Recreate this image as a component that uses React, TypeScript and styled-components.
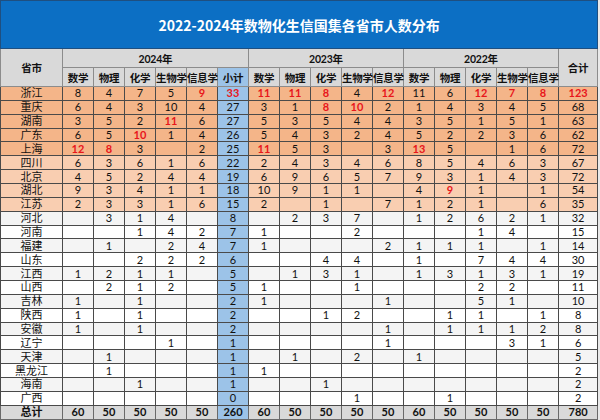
import styled, { createGlobalStyle } from 'styled-components';

// 2022-2024 数物化生信 国集各省市人数分布 —— 表格截图复刻

const GlobalStyle = createGlobalStyle`
  html, body {
    margin: 0;
    padding: 0;
    background: #e9e9e9;
  }
  body {
    font-family: "Noto Sans CJK SC", "Noto Sans", sans-serif;
  }
`;

// ─── data ─────────────────────────────────────────────────────────────────────

type Val = number | null;
type Tone = 'hot' | 'warm' | 'plain';

interface Province {
  name: string;
  // 15 values: 2024 ×5, 2023 ×5, 2022 ×5
  v: Val[];
  // indexes of the displayed numeric columns (0..16) shown in red
  red?: number[];
  tone: Tone;
}

const _ = null;

const provinces: Province[] = [
  { name: '浙江', tone: 'hot', v: [8, 4, 7, 5, 9, 11, 11, 8, 4, 12, 11, 6, 12, 7, 8], red: [4, 5, 6, 7, 8, 10, 13, 14, 15, 16] },
  { name: '重庆', tone: 'hot', v: [6, 4, 3, 10, 4, 3, 1, 8, 10, 2, 1, 4, 3, 4, 5], red: [8, 9] },
  { name: '湖南', tone: 'hot', v: [3, 5, 2, 11, 6, 5, 3, 5, 4, 4, 3, 5, 1, 5, 1], red: [3] },
  { name: '广东', tone: 'hot', v: [6, 5, 10, 1, 4, 5, 4, 3, 2, 4, 5, 2, 2, 3, 6], red: [2] },
  { name: '上海', tone: 'hot', v: [12, 8, 3, _, 2, 11, 5, 3, _, 3, 13, 5, _, 1, 6], red: [0, 1, 6, 11] },
  { name: '四川', tone: 'warm', v: [6, 3, 6, 1, 6, 2, 4, 3, 4, 6, 8, 5, 4, 6, 3] },
  { name: '北京', tone: 'warm', v: [4, 5, 2, 4, 4, 6, 9, 6, 5, 7, 9, 3, 1, 4, 3] },
  { name: '湖北', tone: 'warm', v: [9, 3, 4, 1, 1, 10, 9, 1, 1, _, 4, 9, 1, _, 1], red: [12] },
  { name: '江苏', tone: 'warm', v: [2, 3, 3, 1, 6, 2, _, 1, _, 7, 1, 2, 1, _, 6] },
  { name: '河北', tone: 'plain', v: [_, 3, 1, 4, _, _, 2, 3, 7, _, 1, 2, 6, 2, 1] },
  { name: '河南', tone: 'plain', v: [_, _, 1, 4, 2, 1, _, _, 2, _, _, _, 1, 4, _] },
  { name: '福建', tone: 'plain', v: [_, 1, _, 2, 4, 1, _, _, _, 2, 1, 1, 1, _, 1] },
  { name: '山东', tone: 'plain', v: [_, _, 2, 2, 2, _, _, 4, 4, _, 1, _, 7, 4, 4] },
  { name: '江西', tone: 'plain', v: [1, 2, 1, 1, _, _, 1, 3, 1, _, 1, 3, 1, 3, 1] },
  { name: '山西', tone: 'plain', v: [_, 2, 1, 2, _, 1, _, _, 1, _, _, _, 2, 2, _] },
  { name: '吉林', tone: 'plain', v: [1, _, 1, _, _, 1, _, _, _, 1, _, _, 5, 1, _] },
  { name: '陕西', tone: 'plain', v: [1, _, 1, _, _, _, _, 1, 2, _, _, 1, 1, _, 1] },
  { name: '安徽', tone: 'plain', v: [1, _, 1, _, _, _, _, _, _, 1, _, 1, 1, 1, 2] },
  { name: '辽宁', tone: 'plain', v: [_, _, _, 1, _, _, _, _, _, 1, _, _, _, 3, 1] },
  { name: '天津', tone: 'plain', v: [_, 1, _, _, _, _, 1, _, 2, _, 1, _, _, _, _] },
  { name: '黑龙江', tone: 'plain', v: [_, 1, _, _, _, 1, _, _, _, _, _, _, _, _, _] },
  { name: '海南', tone: 'plain', v: [_, _, 1, _, _, _, _, 1, _, _, _, _, _, _, _] },
  { name: '广西', tone: 'plain', v: [_, _, _, _, _, _, _, _, 1, _, _, 1, _, _, _] },
];

const subjects = ['数学', '物理', '化学', '生物学', '信息学'];
const years = ['2024年', '2023年', '2022年'];

const sum = (xs: Val[]) => xs.reduce<number>((a, b) => a + (b ?? 0), 0);

// turns 15 raw values into the 17 displayed cells (adds 小计 after 2024 and 合计 at the end)
const toCells = (v: Val[]): Val[] => [
  ...v.slice(0, 5),
  sum(v.slice(0, 5)),
  ...v.slice(5, 15),
  sum(v),
];

const totals: Val[] = Array.from({ length: 17 }, (_x, i) =>
  sum(provinces.map((p) => toCells(p.v)[i])),
);

// ─── styles ───────────────────────────────────────────────────────────────────

const cellFont = `"Lato", "Noto Sans CJK SC", sans-serif`;

const Sheet = styled.div`
  width: 600px;
  height: 420px;
  overflow: hidden;
  background: #e9e9e9;
`;

const Table = styled.table`
  width: 597px;
  border-collapse: collapse;
  table-layout: fixed;
  font-size: 11px;
  color: #111;
`;

const TitleCell = styled.th`
  height: 47px;
  padding: 0;
  background: #0c6fc4;
  color: #ffffff;
  font-size: 14px;
  font-weight: 700;
  text-align: center;
  border: 1px solid #1f4f80;
`;

const HeadCell = styled.th<{ $sub?: boolean; $h?: number }>`
  height: ${(p) => p.$h ?? 17}px;
  padding: 0;
  background: ${(p) => (p.$sub ? '#9cc3e8' : '#d9d9d9')};
  font-family: ${cellFont};
  font-weight: 700;
  font-size: 10.5px;
  text-align: center;
  white-space: nowrap;
  letter-spacing: -0.2px;
  border: 1px solid #8c8c8c;
`;

const toneBg: Record<Tone, string> = {
  hot: '#f4b589',
  warm: '#f9ceb1',
  plain: '#ffffff',
};

const BodyRow = styled.tr<{ $tone: Tone; $alt?: boolean }>`
  height: 13.87px;
  background: ${(p) => (p.$tone === 'plain' && p.$alt ? '#f4f4f4' : toneBg[p.$tone])};
`;

const NameCell = styled.td`
  padding: 0;
  text-align: center;
  font-family: ${cellFont};
  font-size: 11px;
  line-height: 12px;
  border: 1px solid #4a4a4a;
`;

const NumCell = styled.td<{ $red?: boolean; $sub?: boolean }>`
  padding: 0;
  text-align: center;
  font-family: ${cellFont};
  line-height: 12px;
  font-size: 11px;
  color: ${(p) => (p.$red ? '#e8161b' : '#111')};
  font-weight: ${(p) => (p.$red ? 700 : 400)};
  background: ${(p) => (p.$sub ? '#9cc3e8' : 'transparent')};
  border: 1px solid #4a4a4a;
`;

const TotalRow = styled.tr`
  height: 14px;
  background: #d9d9d9;
`;

const TotalCell = styled.td<{ $sub?: boolean }>`
  padding: 0;
  text-align: center;
  font-family: ${cellFont};
  font-weight: 700;
  font-size: 11px;
  line-height: 12px;
  background: ${(p) => (p.$sub ? '#9cc3e8' : 'transparent')};
  border: 1px solid #6a6a6a;
`;

// ─── component ────────────────────────────────────────────────────────────────

export default function App() {
  return (
    <Sheet>
      <GlobalStyle />
      <Table>
        <colgroup>
          <col style={{ width: 62 }} />
          {Array.from({ length: 16 }, (_x, i) => (
            <col key={i} style={{ width: 31 }} />
          ))}
          <col style={{ width: 39 }} />
        </colgroup>
        <thead>
          <tr>
            <TitleCell colSpan={18}>2022-2024年数物化生信国集各省市人数分布</TitleCell>
          </tr>
          <tr>
            <HeadCell rowSpan={2}>省市</HeadCell>
            <HeadCell colSpan={6} $h={18}>{years[0]}</HeadCell>
            <HeadCell colSpan={5}>{years[1]}</HeadCell>
            <HeadCell colSpan={5}>{years[2]}</HeadCell>
            <HeadCell rowSpan={2}>合计</HeadCell>
          </tr>
          <tr>
            {subjects.map((s) => (
              <HeadCell key={`a${s}`} $h={18}>{s}</HeadCell>
            ))}
            <HeadCell $sub>小计</HeadCell>
            {subjects.map((s) => (
              <HeadCell key={`b${s}`}>{s}</HeadCell>
            ))}
            {subjects.map((s) => (
              <HeadCell key={`c${s}`}>{s}</HeadCell>
            ))}
          </tr>
        </thead>
        <tbody>
          {provinces.map((p, r) => {
            const cells = toCells(p.v);
            return (
              <BodyRow key={p.name} $tone={p.tone} $alt={r % 2 === 1}>
                <NameCell>{p.name}</NameCell>
                {cells.map((c, i) => (
                  <NumCell key={i} $sub={i === 5} $red={p.red?.includes(i)}>
                    {c ?? ''}
                  </NumCell>
                ))}
              </BodyRow>
            );
          })}
          <TotalRow>
            <TotalCell>总计</TotalCell>
            {totals.map((t, i) => (
              <TotalCell key={i} $sub={i === 5}>{t}</TotalCell>
            ))}
          </TotalRow>
        </tbody>
      </Table>
    </Sheet>
  );
}
